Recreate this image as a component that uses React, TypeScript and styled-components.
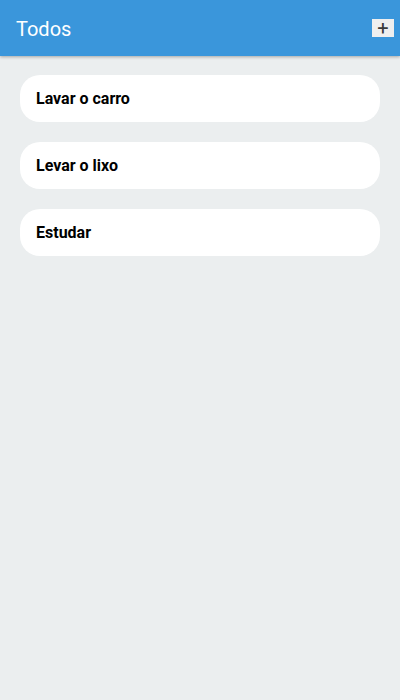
import React from "react";
import styled, { createGlobalStyle } from "styled-components";

const Global = createGlobalStyle`
  html, body { margin: 0; padding: 0; }
  body { background: #ebeeef; font-family: Roboto, "Noto Sans", sans-serif; }
  #root { min-height: 700px; }
`;

const Page = styled.div`
  min-height: 700px;
  background: #ebeeef;
`;

const Header = styled.header`
  height: 56px;
  background: #3a96db;
  display: flex;
  align-items: center;
  justify-content: space-between;
  padding: 0 6px 0 16px;
  box-shadow: 0 1px 3px rgba(0, 0, 0, 0.3);
  position: relative;
`;

const Title = styled.h1`
  margin: 2px 0 0;
  color: #ffffff;
  font-size: 20px;
  font-weight: 400;
  font-family: Roboto, sans-serif;
`;

const AddButton = styled.button`
  width: 22px;
  height: 18px;
  padding: 0;
  border: none;
  background: #efefef;
  color: #3a3a3a;
  font-family: Roboto, sans-serif;
  font-size: 20px;
  font-weight: 400;
  line-height: 18px;
  display: flex;
  align-items: center;
  justify-content: center;
`;

const List = styled.ul`
  list-style: none;
  margin: 0;
  padding: 19px 20px;
  display: flex;
  flex-direction: column;
  gap: 20px;
`;

const Item = styled.li`
  height: 47px;
  background: #ffffff;
  border-radius: 20px;
  display: flex;
  align-items: center;
  padding: 0 16px;
  font-size: 16px;
  font-weight: 700;
  color: #000;
`;

const todos = ["Lavar o carro", "Levar o lixo", "Estudar"];

export default function App() {
  return (
    <Page>
      <Global />
      <Header>
        <Title>Todos</Title>
        <AddButton>+</AddButton>
      </Header>
      <List>
        {todos.map((t) => (
          <Item key={t}>{t}</Item>
        ))}
      </List>
    </Page>
  );
}
